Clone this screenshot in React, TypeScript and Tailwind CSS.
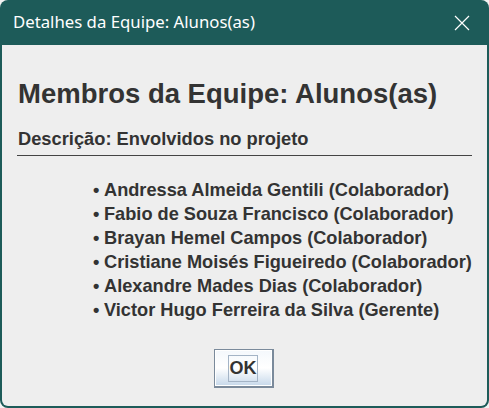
import React from "react";

const members = [
  "Andressa Almeida Gentili (Colaborador)",
  "Fabio de Souza Francisco (Colaborador)",
  "Brayan Hemel Campos (Colaborador)",
  "Cristiane Moisés Figueiredo (Colaborador)",
  "Alexandre Mades Dias (Colaborador)",
  "Victor Hugo Ferreira da Silva (Gerente)",
];

export default function App() {
  return (
    <div className="w-[489px] h-[408px] bg-[#f3f3f3]">
      <div className="w-full h-full flex flex-col rounded-t-[8px] rounded-b-[8px] overflow-hidden bg-[#1d5b59] px-[2px] pb-[2px]">
        {/* title bar */}
        <div className="h-[45px] shrink-0 flex items-center justify-between pl-[11px] pr-[17px]">
          <span
            className="text-white text-[16.75px] leading-none"
            style={{ fontFamily: '"Segoe UI", "Noto Sans", sans-serif' }}
          >
            Detalhes da Equipe: Alunos(as)
          </span>
          <svg width="16" height="16" viewBox="0 0 16 16" className="text-white">
            <path d="M1 1 L15 15 M15 1 L1 15" stroke="currentColor" strokeWidth="1.2" fill="none" />
          </svg>
        </div>

        {/* content */}
        <div
          className="flex-1 flex flex-col bg-[#eeeeee] text-[#333333] rounded-b-[6px] pt-[34px]"
          style={{ fontFamily: '"Liberation Sans", Arial, sans-serif' }}
        >
          <h1 className="pl-[16px] text-[27.5px] font-bold leading-[30px]">
            Membros da Equipe: Alunos(as)
          </h1>
          <div className="mt-[20px] ml-[15px] mr-[15px] border-b border-[#444444] pl-[1px] pb-[6px]">
            <h2 className="text-[18.3px] font-bold leading-[20px]">Descrição: Envolvidos no projeto</h2>
          </div>
          <ul className="mt-[22px] pl-[91px] text-[18.2px] font-bold leading-[24px]">
            {members.map((m) => (
              <li key={m} className="flex">
                <span className="w-[11px] shrink-0">•</span>
                <span>{m}</span>
              </li>
            ))}
          </ul>
          <div className="flex justify-center mt-[27px] pr-[2px]">
            <button className="w-[60px] h-[39px] border border-[#7a8a9b] border-r-2 border-b-2 bg-gradient-to-b from-[#f4f8fc] via-[#ffffff] to-[#c6d8ea] p-[1px] flex items-center justify-center shadow-[inset_0_0_0_1px_#ffffff]">
              <span className="border border-[#a4b4c6] w-[30px] h-[27px] flex items-center justify-center text-[18px] font-bold text-[#333333]">
                OK
              </span>
            </button>
          </div>
        </div>
      </div>
    </div>
  );
}
